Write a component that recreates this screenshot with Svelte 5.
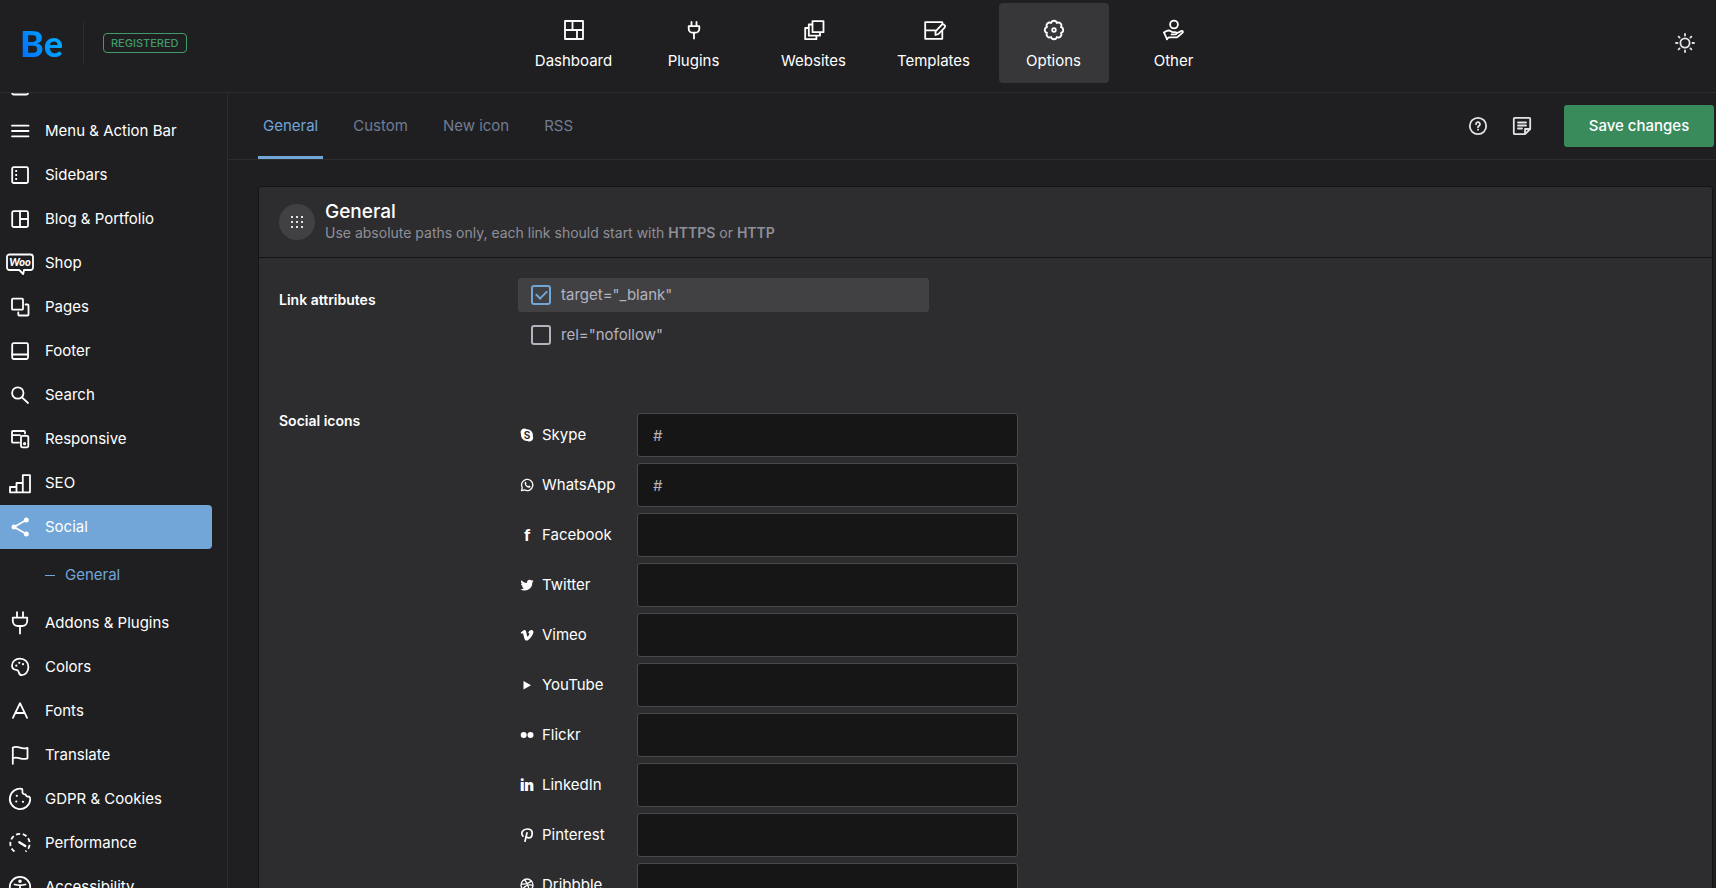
<script>
  const topNav = [
    { label: 'Dashboard', icon: 'dashboard' },
    { label: 'Plugins', icon: 'plugins' },
    { label: 'Websites', icon: 'websites' },
    { label: 'Templates', icon: 'templates' },
    { label: 'Options', icon: 'options' },
    { label: 'Other', icon: 'other' }
  ];

  // 24x24 icons of the top bar
  const topIcons = {
    dashboard: '<path d="M3 3h18v18H3zM3 12h18M10.500 3v9M15 12v9"/>',
    plugins: '<path d="M9.500 4v4M14.500 4v4M6.700 8.200h10.600v2.500a4 4 0 0 1-4 4h-2.600a4 4 0 0 1-4-4zM12 14.700v5.800"/>',
    websites: '<path d="M10.500 3.200h11v11h-11zM10.500 6.500H6.800v11.200H18v-3.500M6.800 10H3.200v11.200h11.200v-3.500"/>',
    templates: '<path d="M20.300 5V4.200H3.200v16.600h17.100v-8M3.200 12.300h10"/><path d="M13.500 17v-3.600l6.200-6.600a1.700 1.700 0 0 1 2.500 0l.4.400a1.700 1.700 0 0 1 0 2.400L16.500 16z"/>',
    options: '<path d="M14.900 19A3 3 0 0 1 9.100 19A3 3 0 0 1 5 14.900A3 3 0 0 1 5 9.100A3 3 0 0 1 9.100 5A3 3 0 0 1 14.900 5A3 3 0 0 1 19 9.100A3 3 0 0 1 19 14.900A3 3 0 0 1 14.900 19z"/><circle cx="12" cy="12" r="1.800"/>',
    other: '<circle cx="12" cy="6.500" r="3.900"/><path d="M2 14.500l3-1.700c1.500-.6 2.700-.3 4 .5l1.500.9h2.800c1.700 0 1.700 2.200 0 2.200H9.500M14.800 15.300l4.300-2.200c1.600-.7 2.500.8 1.300 1.800l-4.600 3.800c-.7.5-1.300.7-2.100.7H7.500c-.7 0-1.300.2-1.800.9l-.8 1"/><path d="M2 14.500l3 6.700"/>'
  };

  // 28x28 icons of the side menu
  const sideIcons = {
    header: '<rect x="6.200" y="6" width="15.800" height="15.500" rx="1.500"/><path d="M6.200 10.500H22"/>',
    menu: '<path d="M6 8.700h16.500M6 14h16.500M6 19.300h16.500"/>',
    sidebars: '<rect x="6.200" y="6.200" width="15.800" height="15.800" rx="1.500"/><path d="M10.200 9v10.500" stroke-dasharray="2 2" stroke-linecap="butt"/>',
    blog: '<rect x="6.200" y="6.200" width="15.800" height="15.800" rx="1.500"/><path d="M14 6.200V22M14 14h8"/>',
    shop: '<path d="M3.500 5.500h21A2.500 2.500 0 0 1 27 8v10.500a2.500 2.500 0 0 1-2.500 2.500H18l-.8 4-4-4H3.500A2.500 2.500 0 0 1 1 18.500V8a2.500 2.500 0 0 1 2.500-2.500z"/><text x="14" y="17" text-anchor="middle" font-family="Lato, sans-serif" font-size="11" font-weight="900" font-style="italic" fill="currentColor" stroke="none">Woo</text>',
    pages: '<rect x="6" y="5.700" width="11" height="11" rx="1"/><path d="M19.500 11.500h2a1 1 0 0 1 1 1v9a1 1 0 0 1-1 1h-8.200a1 1 0 0 1-1-1v-2"/>',
    footer: '<rect x="6.200" y="6.200" width="15.800" height="15.800" rx="1.500"/><path d="M6.200 17.500H22"/>',
    search: '<circle cx="11.800" cy="12" r="5.700"/><path d="M16 16.300l6 5.700"/>',
    responsive: '<path d="M13 17.700H7a1 1 0 0 1-1-1V7a1 1 0 0 1 1-1h11a1 1 0 0 1 1 1v1.500M6 10.200h8"/><rect x="15" y="10.800" width="7.300" height="11.500" rx="1.200"/><circle cx="18.600" cy="18.700" r=".7"/>',
    seo: '<path d="M4 18h6.500v5.300H4zM10.500 14h6.300v9.300h-6.300zM16.800 6.200H24v17.100h-7.200z"/>',
    social: '<path d="M20.300 7L8 14l12.300 7"/><g fill="currentColor" stroke="none"><circle cx="8" cy="14" r="2.500"/><circle cx="20.300" cy="7" r="2.500"/><circle cx="20.300" cy="21" r="2.500"/></g>',
    addons: '<path d="M11 3.200v5M17 3.200v5M6.800 8.600h14.400V12a5 5 0 0 1-5 5h-4.400a5 5 0 0 1-5-5zM14 17v7.500"/>',
    colors: '<path d="M14 5.700c-4.700 0-8 3-8 6.800 0 2.800 2.100 4.200 4.300 4.300 1.600.1 2.100.8 2.400 2.200.4 2 1.500 3.200 3.200 3.200 3.500 0 6.500-3.800 6.500-8.300 0-4.900-3.700-8.200-8.400-8.200z"/><g fill="currentColor" stroke="none"><circle cx="10.300" cy="12.700" r="1.100"/><circle cx="13.300" cy="9.800" r="1.100"/><circle cx="17" cy="11.200" r="1.100"/></g>',
    fonts: '<path d="M6.900 20.800L14 6.200l7.100 14.600M9.300 16h9.400"/>',
    translate: '<path d="M6.800 22.800V6.500c2.500-1 4.700-.7 7.200.2s5 1 7.500.2v10.400c-2.500 1-5 .8-7.500 0s-4.700-1.200-7.200-.2"/>',
    gdpr: '<path d="M16 3.900a10.200 10.200 0 1 0 8.200 10.800c.1-2-.2-2.700-1-3.100-2 .4-3.300-.6-3.600-2.300-2.100.1-3.600-1-3.200-3.100.1-1 .1-1.800-.4-2.300z"/><g fill="currentColor" stroke="none"><circle cx="10.800" cy="10.800" r="1.100"/><circle cx="10.300" cy="16.500" r="1.100"/><circle cx="17" cy="16.800" r="1.100"/></g>',
    performance: '<path d="M8.500 22.500a9.700 9.700 0 1 1 11 0" stroke-dasharray="4.200 2.600" stroke-linecap="butt"/><path d="M13.300 13.200l6 3.700" stroke-width="2.400"/>',
    accessibility: '<circle cx="14" cy="14" r="10.200"/><circle cx="14" cy="8.300" r=".9"/><path d="M8.500 11.500c3.500 1 7.500 1 11 0M14 12.200v4.500M14 16l-3 5M14 16l3 5"/>'
  };

  const menu = [
    { label: '', icon: 'header' },
    { label: 'Menu & Action Bar', icon: 'menu' },
    { label: 'Sidebars', icon: 'sidebars' },
    { label: 'Blog & Portfolio', icon: 'blog' },
    { label: 'Shop', icon: 'shop' },
    { label: 'Pages', icon: 'pages' },
    { label: 'Footer', icon: 'footer' },
    { label: 'Search', icon: 'search' },
    { label: 'Responsive', icon: 'responsive' },
    { label: 'SEO', icon: 'seo' },
    { label: 'Social', icon: 'social', children: ['General'] },
    { label: 'Addons & Plugins', icon: 'addons' },
    { label: 'Colors', icon: 'colors' },
    { label: 'Fonts', icon: 'fonts' },
    { label: 'Translate', icon: 'translate' },
    { label: 'GDPR & Cookies', icon: 'gdpr' },
    { label: 'Performance', icon: 'performance' },
    { label: 'Accessibility', icon: 'accessibility' }
  ];

  const tabs = ['General', 'Custom', 'New icon', 'RSS'];

  // 14x14 network icons, filled
  const networkIcons = {
    skype: '<path d="M4 .5a3.600 3.600 0 0 1 2.500.7 6 6 0 0 1 6.300 7.100A3.700 3.700 0 0 1 7.600 13 6 6 0 0 1 1.100 6 3.700 3.700 0 0 1 4 .5z"/><text x="7" y="10.700" text-anchor="middle" font-family="Inter, sans-serif" font-size="10" font-weight="700" fill="#2d2d2f">S</text>',
    whatsapp: '<path d="M1.500 12.700l.8-3a5.600 5.600 0 1 1 2.200 2.200z" fill="none" stroke="currentColor" stroke-width="1.300" stroke-linejoin="round"/><path d="M5 4c.5-.4.9-.3 1.100.2l.4 1c.1.4-.4.7-.5 1 .5 1 1.200 1.600 2.200 2 .4-.1.6-.7 1-.6l1.100.6c.4.300.1 1-.3 1.300-2.400 1.400-6.600-3.100-5-5.500z"/>',
    facebook: '<text x="7" y="13" text-anchor="middle" font-family="Lato, sans-serif" font-size="17" font-weight="900">f</text>',
    twitter: '<path d="M13.600 3c-.5.200-1 .4-1.500.4.600-.3 1-.8 1.200-1.400-.6.300-1.100.5-1.700.6A2.700 2.700 0 0 0 7 5C4.700 4.900 2.800 3.800 1.400 2.200c-.7 1.200-.4 2.800.8 3.600-.4 0-.8-.1-1.200-.3 0 1.300.9 2.400 2.100 2.700-.4.1-.8.100-1.200 0 .3 1.100 1.300 1.800 2.500 1.900A5.500 5.500 0 0 1 .4 11.200a7.700 7.700 0 0 0 11.900-6.800c.5-.4 1-.9 1.300-1.400z"/>',
    vimeo: '<path d="M13.400 4.200c-.1 2.600-4.500 8.400-7 8.400-2 0-2.300-3.600-3.200-6.600-.3-1-.7-1-1.700-.3L.7 4.600C2 3.500 3.500 2 4.500 2c1.400 0 1.700 1.300 2 3.200.4 2.400.7 3.400 1.100 3.400.6 0 1.900-2.300 1.800-3 0-.7-.7-.7-1.300-.4C9 1.400 13.600.8 13.400 4.200z"/>',
    youtube: '<path d="M3.500 3l7.500 4.200-7.500 4.300z"/>',
    flickr: '<circle cx="3.700" cy="7" r="3"/><circle cx="10.500" cy="7" r="3"/>',
    linkedin: '<text x="7" y="13" text-anchor="middle" font-family="Inter, sans-serif" font-size="15" font-weight="900">in</text>',
    pinterest: '<path d="M3 8.200C.2 4.800 3 1 7.200 1c3 0 5 1.800 5 4.200 0 2.800-1.600 4.700-3.700 4.700-1 0-1.800-.5-2.100-1.200M7 4.800L5 13.200" fill="none" stroke="currentColor" stroke-width="1.700" stroke-linecap="round"/>',
    dribbble: '<g fill="none" stroke="currentColor" stroke-width="1.300"><circle cx="7" cy="7" r="6"/><path d="M4.500 1.500c2.500 3 4 6.500 4.700 11M1 6c4 .3 7.500-.3 10.200-3M2.800 11.300C5 7.500 8.500 6.300 13 7.300"/></g>'
  };

  let target = true;
  let nofollow = false;

  let networks = [
    { id: 'skype', label: 'Skype', url: '#' },
    { id: 'whatsapp', label: 'WhatsApp', url: '#' },
    { id: 'facebook', label: 'Facebook', url: '' },
    { id: 'twitter', label: 'Twitter', url: '' },
    { id: 'vimeo', label: 'Vimeo', url: '' },
    { id: 'youtube', label: 'YouTube', url: '' },
    { id: 'flickr', label: 'Flickr', url: '' },
    { id: 'linkedin', label: 'LinkedIn', url: '' },
    { id: 'pinterest', label: 'Pinterest', url: '' },
    { id: 'dribbble', label: 'Dribbble', url: '' }
  ];
</script>

<div class="page">
  <header class="topbar">
    <div class="brand">
      <a class="logo" href="#home">Be</a>
      <span class="badge">REGISTERED</span>
    </div>

    <nav class="topnav">
      {#each topNav as item}
        <a href="#{item.icon}" class:active={item.icon === 'options'}>
          <svg class="line" width="24" height="24" viewBox="0 0 24 24">{@html topIcons[item.icon]}</svg>
          <span>{item.label}</span>
        </a>
      {/each}
    </nav>

    <div class="tools">
      <button class="icon-btn" aria-label="Toggle theme">
        <svg class="line" width="20" height="20" viewBox="0 0 20 20">
          <circle cx="10" cy="10" r="4.600" />
          <path d="M10 1v1.500M10 17.500V19M1 10h1.500M17.500 10H19M3.600 3.600l1 1M15.400 15.400l1 1M16.400 3.600l-1 1M4.600 15.400l-1 1" />
        </svg>
      </button>
    </div>
  </header>

  <div class="body">
    <aside class="sidebar">
      <ul class="menu">
        {#each menu as item}
          <li>
            <a class="menu-item" class:active={item.children} href="#{item.icon}" aria-label={item.label || item.icon}>
              <svg class="line" width="28" height="28" viewBox="0 0 28 28">{@html sideIcons[item.icon]}</svg>
              <span>{item.label}</span>
            </a>
            {#if item.children}
              {#each item.children as child}
                <a class="sub-item" href="#social-general">{child}</a>
              {/each}
            {/if}
          </li>
        {/each}
      </ul>
    </aside>

    <main>
      <div class="subbar">
        <nav class="tabs">
          {#each tabs as tab, i}
            <a href="#tab-{i}" class:active={i === 0}>{tab}</a>
          {/each}
        </nav>

        <div class="actions">
          <button class="icon-btn" aria-label="Help">
            <svg class="line" width="20" height="20" viewBox="0 0 20 20">
              <circle cx="10" cy="10" r="8.200" />
              <path d="M8 8.200a2 2 0 1 1 3 1.700c-.7.4-1 .7-1 1.400M10 13.600v.2" />
            </svg>
          </button>
          <button class="icon-btn" aria-label="Notes">
            <svg class="line" width="20" height="20" viewBox="0 0 20 20">
              <path d="M18.200 13V2.800a1 1 0 0 0-1-1H2.800a1 1 0 0 0-1 1v14.400a1 1 0 0 0 1 1H13zM13 18v-5h5M6 6.500h8M6 9.500h8M6 12.500h4" />
            </svg>
          </button>
          <button class="save">Save changes</button>
        </div>
      </div>

      <section class="card">
        <div class="card-head">
          <div class="card-icon">
            <svg width="12" height="12" viewBox="0 0 12 12" fill="#e4e4e6">
              <path d="M0 0h2v2H0zM5 0h2v2H5zM10 0h2v2h-2zM0 5h2v2H0zM5 5h2v2H5zM10 5h2v2h-2zM0 10h2v2H0zM5 10h2v2H5zM10 10h2v2h-2z" />
            </svg>
          </div>
          <div>
            <h1>General</h1>
            <p>Use absolute paths only, each link should start with <b>HTTPS</b> or <b>HTTP</b></p>
          </div>
        </div>

        <div class="row">
          <h2>Link attributes</h2>
          <div class="checks">
            <label class="check" class:checked={target}>
              <input type="checkbox" bind:checked={target} />
              <span>target="_blank"</span>
            </label>
            <label class="check" class:checked={nofollow}>
              <input type="checkbox" bind:checked={nofollow} />
              <span>rel="nofollow"</span>
            </label>
          </div>
        </div>

        <div class="row">
          <h2>Social icons</h2>
          <div class="networks">
            {#each networks as network}
              <div class="network">
                <label for={network.id}>
                  <svg width="14" height="14" viewBox="0 0 14 14" fill="currentColor">{@html networkIcons[network.id]}</svg>
                  {network.label}
                </label>
                <input id={network.id} type="text" bind:value={network.url} />
              </div>
            {/each}
          </div>
        </div>
      </section>
    </main>
  </div>
</div>

<style>
  :global(body) {
    background: #1f1f21;
  }

  .page {
    display: flex;
    flex-direction: column;
    height: 100vh;
    overflow: hidden;
    background: #1f1f21;
    color: #fff;
    font-family: Inter, 'Open Sans', sans-serif;
    font-size: 15px;
    line-height: 20px;
  }

  .page * {
    box-sizing: border-box;
  }

  a {
    color: inherit;
    text-decoration: none;
  }

  .line {
    flex: none;
    overflow: visible;
    fill: none;
    stroke: currentColor;
    stroke-width: 1.8;
    stroke-linecap: round;
    stroke-linejoin: round;
  }

  .icon-btn {
    display: flex;
    padding: 0;
    border: 0;
    background: none;
    color: #e4e4e6;
    cursor: pointer;
  }

  /* top bar */
  .topbar {
    display: flex;
    flex: none;
    align-items: center;
    padding: 3px 21px 9px 20px;
    border-bottom: 1px solid #2d2d2f;
  }

  .brand {
    display: flex;
    flex: 1 0 32px;
    align-items: center;
  }

  .logo {
    padding-right: 20px;
    border-right: 1px solid #2d2d2f;
    font-family: Lato, sans-serif;
    font-size: 36px;
    font-weight: 900;
    line-height: 42px;
    color: transparent;
    background: linear-gradient(60deg, #0073ff 10%, #00b4ff 70%);
    background-clip: text;
  }

  .badge {
    margin-left: 19px;
    padding: 0 7px;
    border: 1px solid #3f9c68;
    border-radius: 4px;
    color: #3f9c68;
    font-size: 11px;
    font-weight: 500;
    line-height: 18px;
  }

  .topnav {
    display: flex;
    gap: 10px;
  }

  .topnav a {
    display: flex;
    flex-direction: column;
    align-items: center;
    gap: 9px;
    width: 110px;
    padding: 15px 0 12px;
    border-radius: 4px;
  }

  .topnav a.active {
    background: #373739;
  }

  .tools {
    display: flex;
    flex: 1 0 0;
    justify-content: flex-end;
  }

  /* side menu */
  .body {
    display: flex;
    flex: 1;
    min-height: 0;
  }

  .sidebar {
    flex: none;
    width: 228px;
    overflow: hidden;
    border-right: 1px solid #2d2d2f;
  }

  .menu {
    margin: -28px 15px 0 0;
    padding: 0;
    list-style: none;
  }

  .menu-item {
    display: flex;
    align-items: center;
    gap: 11px;
    height: 44px;
    padding-left: 6px;
    border-radius: 0 4px 4px 0;
  }

  .menu-item.active {
    background: #72a5d8;
  }

  .sub-item {
    display: flex;
    align-items: center;
    gap: 10px;
    height: 52px;
    padding-left: 45px;
    color: #72a5d8;
  }

  .sub-item::before {
    content: '';
    width: 10px;
    height: 1px;
    background: #72a5d8;
  }

  /* content */
  main {
    flex: 1;
    min-width: 0;
    overflow: hidden;
  }

  .subbar {
    display: flex;
    justify-content: space-between;
    align-items: center;
    height: 67px;
    padding: 0 2px 0 30px;
    border-bottom: 1px solid #2d2d2f;
  }

  .tabs {
    display: flex;
    gap: 25px;
    align-self: stretch;
  }

  .tabs a {
    display: flex;
    align-items: center;
    padding: 3px 5px 0;
    border-bottom: 3px solid transparent;
    color: #707c93;
  }

  .tabs a.active {
    color: #72a5d8;
    border-color: #72a5d8;
  }

  .actions {
    display: flex;
    align-items: center;
    gap: 24px;
  }

  .save {
    margin-left: 8px;
    width: 150px;
    height: 42px;
    border: 0;
    border-radius: 3px;
    background: #3a8b5c;
    color: #fff;
    font: inherit;
    font-weight: 500;
    cursor: pointer;
  }

  .card {
    margin: 26px 3px 0 30px;
    border: 1px solid #151516;
    border-radius: 3px;
    background: #2d2d2f;
  }

  .card-head {
    display: flex;
    align-items: center;
    gap: 10px;
    padding: 14px 20px;
    border-bottom: 1px solid #151516;
  }

  .card-icon {
    display: flex;
    align-items: center;
    justify-content: center;
    width: 36px;
    height: 36px;
    border-radius: 50%;
    background: #414143;
  }

  h1 {
    margin: 0;
    font-size: 19px;
    font-weight: 500;
    line-height: 22px;
  }

  .card-head p {
    margin: 0;
    color: #8f8f98;
    font-size: 14px;
    line-height: 20px;
  }

  b {
    font-weight: 600;
  }

  .row {
    display: flex;
    padding: 20px 20px 27px;
  }

  h2 {
    flex: none;
    width: 239px;
    margin: 0;
    padding-top: 12px;
    font-size: 14px;
    font-weight: 600;
    line-height: 20px;
  }

  .checks {
    display: flex;
    flex-direction: column;
    gap: 6px;
    width: 100%;
    max-width: 411px;
  }

  .check {
    display: flex;
    align-items: center;
    gap: 10px;
    height: 34px;
    padding: 0 13px;
    border-radius: 3px;
    color: #b3b3bf;
  }

  .check.checked {
    background: #414143;
  }

  .check input {
    display: grid;
    place-items: center;
    width: 20px;
    height: 20px;
    margin: 0;
    appearance: none;
    border: 2px solid #b3b3bf;
    border-radius: 3px;
  }

  .check input:checked {
    border-color: #72a5d8;
  }

  .check input:checked::before {
    content: '';
    width: 9px;
    height: 5px;
    margin-bottom: 3px;
    border: solid #72a5d8;
    border-width: 0 0 2px 2px;
    transform: rotate(-45deg);
  }

  .networks {
    display: flex;
    flex-direction: column;
    gap: 6px;
    width: 100%;
    max-width: 500px;
    padding-top: 14px;
  }

  .network {
    display: flex;
    align-items: center;
  }

  .network label {
    display: flex;
    flex: none;
    align-items: center;
    gap: 8px;
    width: 119px;
    padding-left: 2px;
  }

  .network input {
    flex: 1;
    min-width: 0;
    height: 44px;
    padding: 0 15px;
    border: 1px solid #49494b;
    border-radius: 3px;
    background: #161616;
    color: #b3b3bf;
    font: inherit;
  }
</style>
